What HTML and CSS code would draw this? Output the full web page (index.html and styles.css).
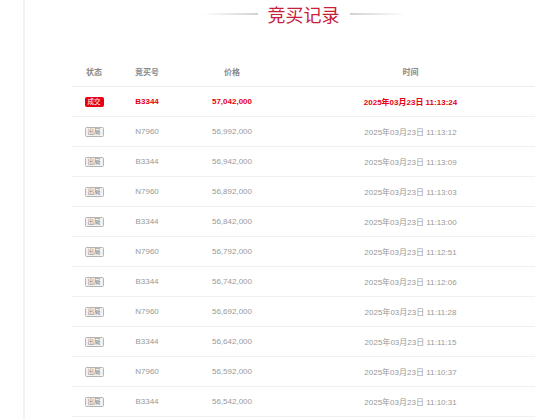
FILE: index.html
```html
<!DOCTYPE html>
<html lang="zh-CN">
<head>
<meta charset="utf-8">
<title>竞买记录</title>
<link rel="stylesheet" href="styles.css">
</head>
<body>
<div class="page">
  <div class="side"></div>
  <div class="main">
    <div class="title">
      <span class="title-line left"></span>
      <h2 class="title-text">竞买记录</h2>
      <span class="title-line right"></span>
    </div>
    <div class="table">
      <div class="row head">
        <div>状态</div><div>竞买号</div><div>价格</div><div>时间</div>
      </div>
      <div class="row win">
        <div><span class="badge badge-win">成交</span></div><div>B3344</div><div>57,042,000</div><div>2025年03月23日 11:13:24</div>
      </div>
      <div class="row">
        <div><span class="badge badge-out">出局</span></div><div>N7960</div><div>56,992,000</div><div>2025年03月23日 11:13:12</div>
      </div>
      <div class="row">
        <div><span class="badge badge-out">出局</span></div><div>B3344</div><div>56,942,000</div><div>2025年03月23日 11:13:09</div>
      </div>
      <div class="row">
        <div><span class="badge badge-out">出局</span></div><div>N7960</div><div>56,892,000</div><div>2025年03月23日 11:13:03</div>
      </div>
      <div class="row">
        <div><span class="badge badge-out">出局</span></div><div>B3344</div><div>56,842,000</div><div>2025年03月23日 11:13:00</div>
      </div>
      <div class="row">
        <div><span class="badge badge-out">出局</span></div><div>N7960</div><div>56,792,000</div><div>2025年03月23日 11:12:51</div>
      </div>
      <div class="row">
        <div><span class="badge badge-out">出局</span></div><div>B3344</div><div>56,742,000</div><div>2025年03月23日 11:12:06</div>
      </div>
      <div class="row">
        <div><span class="badge badge-out">出局</span></div><div>N7960</div><div>56,692,000</div><div>2025年03月23日 11:11:28</div>
      </div>
      <div class="row">
        <div><span class="badge badge-out">出局</span></div><div>B3344</div><div>56,642,000</div><div>2025年03月23日 11:11:15</div>
      </div>
      <div class="row">
        <div><span class="badge badge-out">出局</span></div><div>N7960</div><div>56,592,000</div><div>2025年03月23日 11:10:37</div>
      </div>
      <div class="row">
        <div><span class="badge badge-out">出局</span></div><div>B3344</div><div>56,542,000</div><div>2025年03月23日 11:10:31</div>
      </div>
    </div>
  </div>
</div>
</body>
</html>
```
FILE: styles.css
```css
html, body {
  margin: 0;
  padding: 0;
  background: #fff;
  overflow: hidden;
}
body {
  font-family: "Liberation Sans", Arial, "Noto Sans CJK SC", sans-serif;
  color: #999;
}
.page {
  display: flex;
  min-height: 100vh;
}
.side {
  width: 23px;
  flex: none;
  border-right: 2px solid #f2f2f2;
}
.main {
  flex: 1;
  padding: 0 15px 0 47px;
}
.title {
  display: flex;
  justify-content: center;
  align-items: center;
  gap: 10px;
  height: 28px;
  margin-bottom: 29px;
}
.title-text {
  margin: 0;
  font-size: 18px;
  font-weight: normal;
  line-height: 28px;
  color: #c8203b;
  font-family: "Noto Sans CJK SC", sans-serif;
}
.title-line {
  width: 56px;
  height: 2px;
}
.title-line.left {
  background: linear-gradient(to right, rgba(220,220,220,0), #d2d2d2);
}
.title-line.right {
  background: linear-gradient(to left, rgba(220,220,220,0), #d2d2d2);
}
.table {
  display: flex;
  flex-direction: column;
}
.row {
  display: grid;
  grid-template-columns: 44px 62px 108px 1fr;
  height: 29px;
  align-items: center;
  border-bottom: 1px solid #f0f0f0;
  font-size: 8px;
  text-align: center;
}
.row.head {
  color: #888;
  font-weight: bold;
  border-bottom-color: #ececec;
}
.row.win {
  color: #e60012;
  font-weight: bold;
}
.badge {
  display: inline-block;
  font-size: 6.5px;
  line-height: 8px;
  height: 8px;
  padding: 0 2px;
  border-radius: 1.5px;
  font-weight: normal;
  vertical-align: middle;
}
.badge-win {
  background: #e60012;
  color: #fff;
  border: 1px solid #e60012;
}
.badge-out {
  background: #f2f2f2;
  color: #888;
  border: 1px solid #b5b5b5;
}
```
